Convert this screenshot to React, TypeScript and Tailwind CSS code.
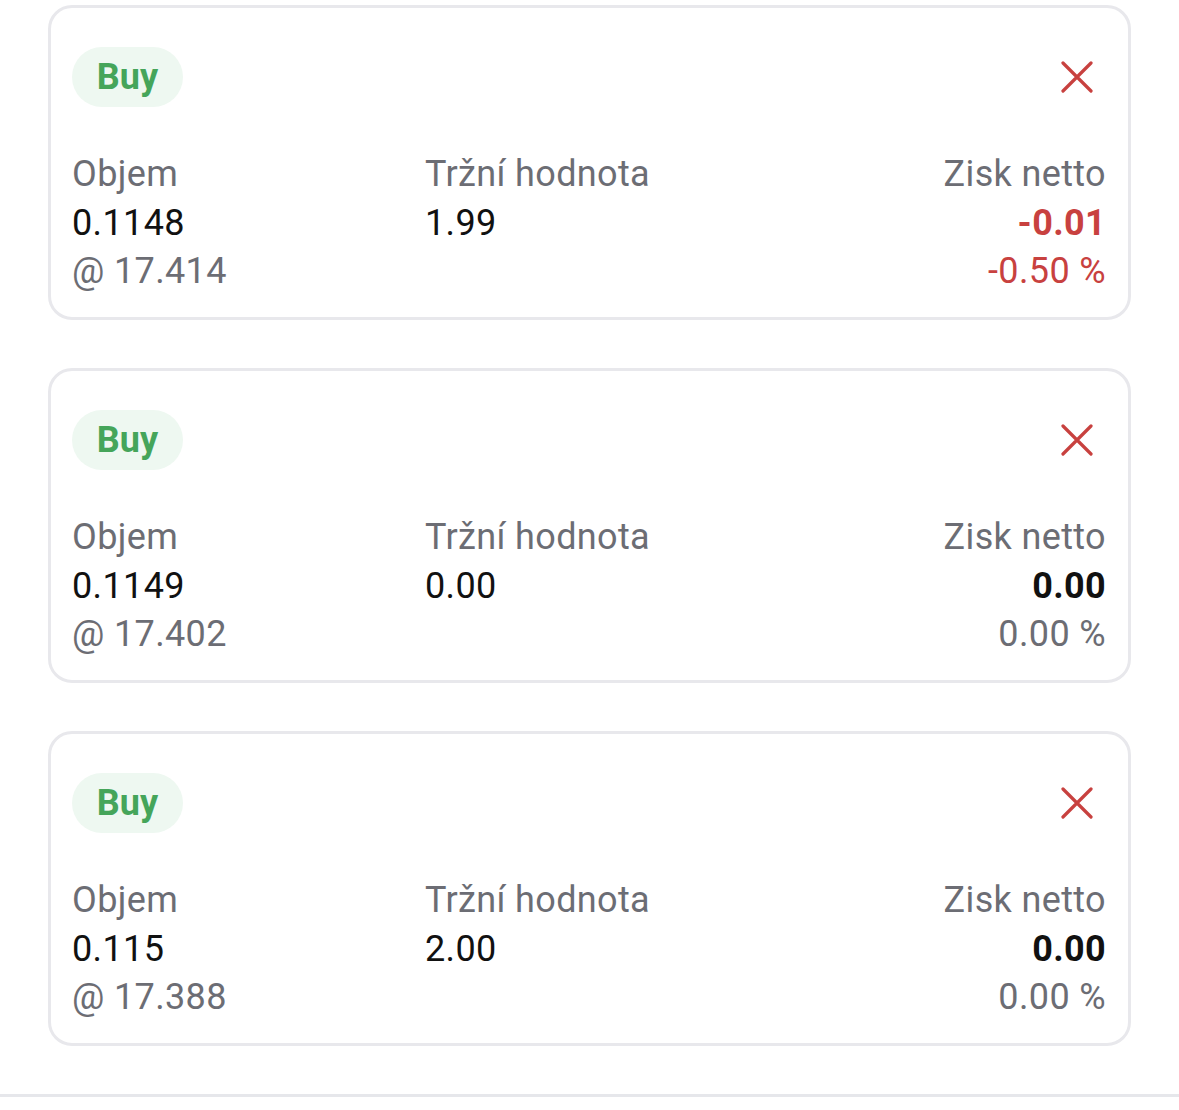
const positions = [
  { volume: "0.1148", price: "17.414", value: "1.99", profit: "-0.01", pct: "-0.50 %", loss: true },
  { volume: "0.1149", price: "17.402", value: "0.00", profit: "0.00", pct: "0.00 %", loss: false },
  { volume: "0.115", price: "17.388", value: "2.00", profit: "0.00", pct: "0.00 %", loss: false },
];

const CloseIcon = () => (
  <svg width="32" height="32" viewBox="0 0 32 32" fill="none">
    <path d="M2 2L30 30M30 2L2 30" stroke="#c8413f" strokeWidth="3.2" strokeLinecap="round" />
  </svg>
);

const PositionCard = ({ p }: { p: (typeof positions)[number] }) => {
  return (
    <div className="mx-12 h-[315px] rounded-[24px] border-[3px] border-[#e8e8ec] bg-white pt-[39px] pl-[21px] pr-[22px]">
      <div className="flex items-center justify-between">
        <span className="flex h-[60px] w-[111px] items-center justify-center rounded-full bg-[#eef8f1] text-[36px] font-bold text-[#45a55a]">
          Buy
        </span>
        <button className="mr-[13px]">
          <CloseIcon />
        </button>
      </div>
      <div className="mt-[43px] grid grid-cols-[353px_1fr_auto] text-[36px] leading-[48.5px] tracking-[0.01em]">
        <div>
          <p className="text-[#6c6d74]">Objem</p>
          <p className="text-[#111111]">{p.volume}</p>
          <p className="text-[#6c6d74]">@ {p.price}</p>
        </div>
        <div>
          <p className="text-[#6c6d74]">Tržní hodnota</p>
          <p className="text-[#111111]">{p.value}</p>
        </div>
        <div className="text-right">
          <p className="text-[#6c6d74]">Zisk netto</p>
          <p className={`font-bold ${p.loss ? "text-[#c8413f]" : "text-[#111111]"}`}>{p.profit}</p>
          <p className={p.loss ? "text-[#c8413f]" : "text-[#6c6d74]"}>{p.pct}</p>
        </div>
      </div>
    </div>
  );
};

export default function App() {
  return (
    <div className="min-h-[1110px] bg-white pt-[5px]" style={{ fontFamily: "Roboto, sans-serif" }}>
      <div className="flex flex-col gap-12">
        {positions.map((p, i) => (
          <PositionCard key={i} p={p} />
        ))}
      </div>
      <div className="mt-12 h-[3px] bg-[#e6e7eb]" />
    </div>
  );
}
